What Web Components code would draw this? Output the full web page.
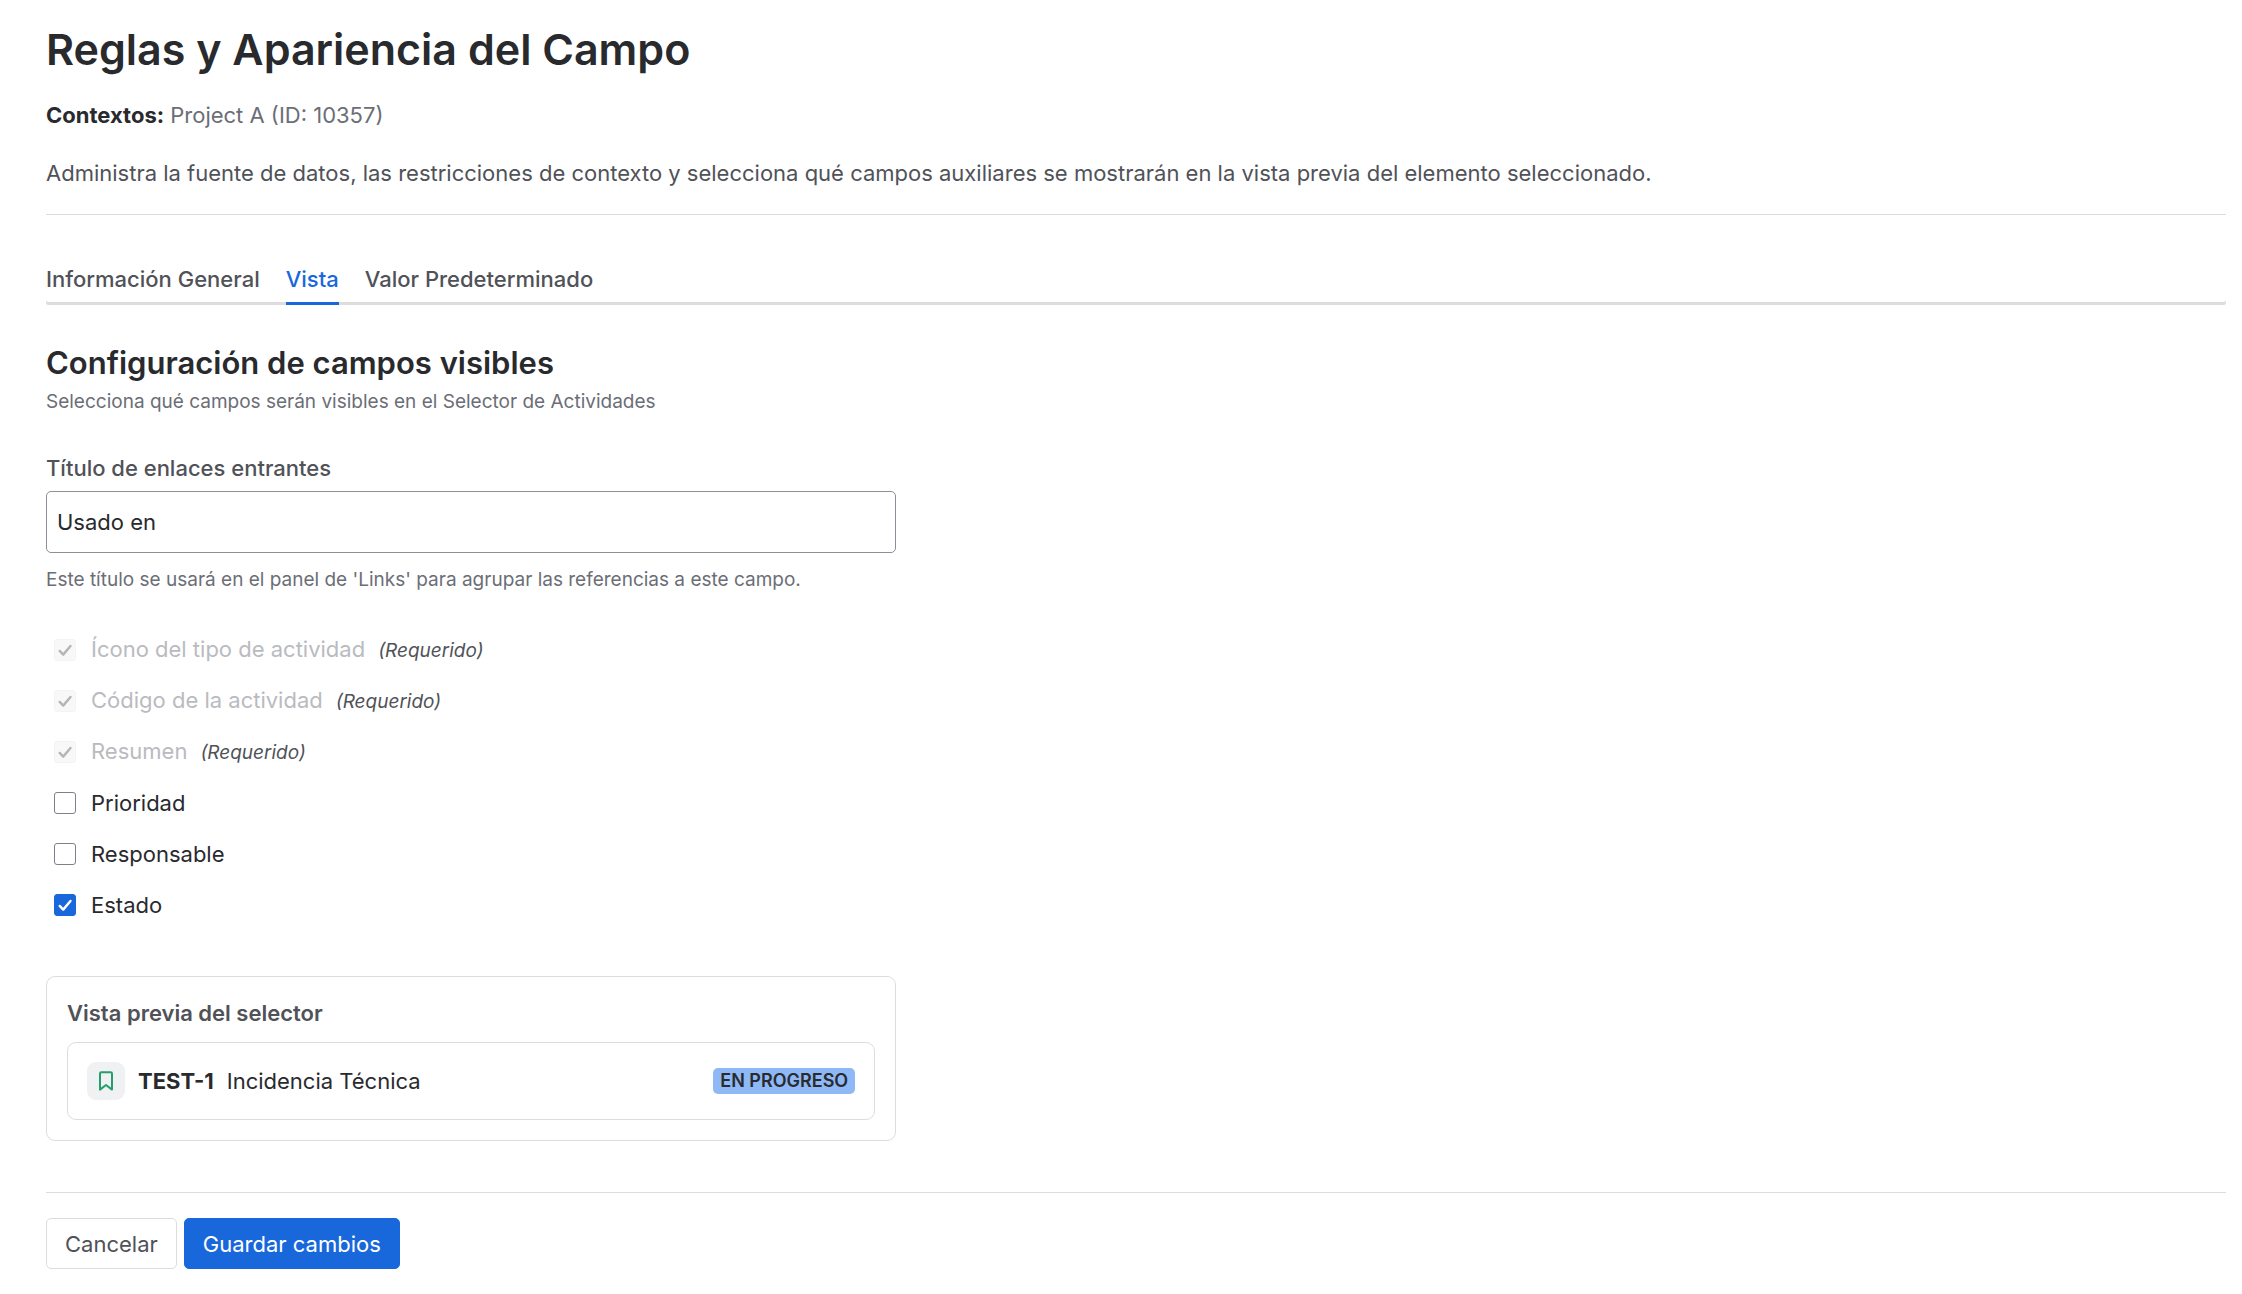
<!DOCTYPE html>
<html lang="es">
<head>
<meta charset="utf-8">
<title>Reglas y Apariencia del Campo</title>
<style>
  body {
    margin: 0;
    background: #fff;
    color: #292a2e;
    font: 400 22px/32px Inter, "Liberation Sans", sans-serif;
    --text: #292a2e;
    --subtle: #505258;
    --subtlest: #6b6e76;
    --disabled: #b9bbc0;
    --line: #dddddf;
    --brand: #1868db;
  }
</style>
</head>
<body>
<field-config-page></field-config-page>

<template id="page-tpl">
  <style>
    :host { display: block; padding: 25px 16px 24px 46px; }
    form { display: flex; flex-direction: column; }
    .narrow { width: 39%; box-sizing: border-box; }
    h2 { margin: 38px 0 7px; font-size: 31px; line-height: 40px; font-weight: 600; }
    .hint { margin: 0; font-size: 19px; line-height: 24px; color: var(--subtlest); }
    text-field { margin-top: 38px; }
    .list { margin: 32px 0 46px; }
    footer { display: flex; gap: 7px; margin-top: 51px; padding-top: 25px; border-top: 1px solid var(--line); }
  </style>
  <page-header heading="Reglas y Apariencia del Campo">
    <span slot="label">Contextos:</span>
    <span slot="context">Project A (ID: 10357)</span>
    <span slot="description">Administra la fuente de datos, las restricciones de contexto y selecciona qué campos auxiliares se mostrarán en la vista previa del elemento seleccionado.</span>
  </page-header>
  <tab-bar tabs="Información General|Vista|Valor Predeterminado" active="1"></tab-bar>
  <form>
    <h2>Configuración de campos visibles</h2>
    <p class="hint">Selecciona qué campos serán visibles en el Selector de Actividades</p>
    <text-field class="narrow" label="Título de enlaces entrantes" value="Usado en">Este título se usará en el panel de 'Links' para agrupar las referencias a este campo.</text-field>
    <div class="list">
      <check-option checked disabled note="(Requerido)">Ícono del tipo de actividad</check-option>
      <check-option checked disabled note="(Requerido)">Código de la actividad</check-option>
      <check-option checked disabled note="(Requerido)">Resumen</check-option>
      <check-option>Prioridad</check-option>
      <check-option>Responsable</check-option>
      <check-option checked>Estado</check-option>
    </div>
    <issue-preview class="narrow">
      <span slot="heading">Vista previa del selector</span>
      <span slot="key">TEST-1</span>
      <span slot="summary">Incidencia Técnica</span>
      <span slot="status">EN PROGRESO</span>
    </issue-preview>
    <footer>
      <action-button>Cancelar</action-button>
      <action-button primary>Guardar cambios</action-button>
    </footer>
  </form>
</template>

<template id="header-tpl">
  <style>
    :host { display: block; padding-bottom: 25px; border-bottom: 1px solid var(--line); }
    h1 { margin: 0; font-size: 43px; line-height: 48px; font-weight: 600; }
    p { margin: 26px 0 0; color: var(--subtle); }
    .context { color: var(--subtlest); }
    b { font-weight: 700; color: var(--text); }
  </style>
  <h1></h1>
  <p class="context"><b><slot name="label"></slot></b> <slot name="context"></slot></p>
  <p><slot name="description"></slot></p>
</template>

<template id="tabs-tpl">
  <style>
    :host { display: block; margin-top: 48px; }
    div { display: flex; gap: 26px; box-shadow: inset 0 -3px var(--line); border-radius: 2px; }
    button {
      margin: 0; padding: 0 0 7px; border: 0; border-bottom: 3px solid transparent; background: none;
      font: inherit; font-weight: 500; color: var(--subtle); cursor: pointer;
    }
    button[aria-selected="true"] { color: var(--brand); border-color: var(--brand); }
  </style>
  <div role="tablist"></div>
</template>

<template id="text-tpl">
  <style>
    :host { display: flex; flex-direction: column; }
    label { font-weight: 500; color: var(--subtle); }
    input {
      box-sizing: border-box; width: 100%; height: 62px; margin: 7px 0 15px; padding: 0 10px;
      border: 1px solid #8c8f97; border-radius: 5px; background: #fff; font: inherit; color: var(--text);
    }
    small { font-size: 19px; line-height: 24px; color: var(--subtlest); }
  </style>
  <label for="field"></label>
  <input id="field" type="text">
  <small><slot></slot></small>
</template>

<template id="check-tpl">
  <style>
    :host { display: flex; align-items: center; height: 51px; padding-left: 8px; }
    .box { display: grid; width: 22px; height: 22px; margin-right: 15px; }
    .box > * { grid-area: 1 / 1; }
    .text { display: flex; align-items: baseline; gap: 13px; }
    input {
      appearance: none; box-sizing: border-box; width: 22px; height: 22px; margin: 0;
      border: 1px solid #7d818a; border-radius: 3px; background: #fff;
    }
    input:checked { background: var(--brand); border-color: var(--brand); }
    input:disabled { background: #f8f8f8; border-color: #f4f4f5; }
    svg { width: 22px; height: 22px; fill: none; stroke: #fff; stroke-width: 2.4; stroke-linecap: round; stroke-linejoin: round; pointer-events: none; visibility: hidden; }
    input:checked + svg { visibility: visible; }
    input:disabled + svg { stroke: #b3b5ba; }
    :host([disabled]) label { color: var(--disabled); }
    em { font-size: 19px; color: var(--subtle); }
  </style>
  <span class="box">
    <input id="check" type="checkbox">
    <svg viewBox="0 0 22 22" aria-hidden="true"><path d="M5.7 11.9 9.2 15.6 16.5 7"/></svg>
  </span>
  <span class="text"><label for="check"><slot></slot></label></span>
</template>

<template id="preview-tpl">
  <style>
    :host { display: block; padding: 20px; border: 1px solid var(--line); border-radius: 9px; }
    .heading { font-weight: 600; color: var(--subtle); margin-bottom: 13px; }
    .issue { display: flex; align-items: center; padding: 19px; border: 1px solid var(--line); border-radius: 9px; }
    .icon { display: flex; width: 38px; height: 38px; border-radius: 9px; background: #f0f1f2; margin-right: 13px; }
    svg { width: 38px; height: 38px; fill: none; stroke: #22a06b; stroke-width: 2; stroke-linejoin: round; }
    .key { font-weight: 700; margin-right: 13px; }
    .status {
      margin-left: auto; padding: 0 7px; border-radius: 5px; background: #8fb8f6;
      font-size: 18px; line-height: 26px; font-weight: 600;
    }
  </style>
  <div class="heading"><slot name="heading"></slot></div>
  <div class="issue">
    <span class="icon"><svg viewBox="0 0 38 38" aria-hidden="true"><path d="M13 27.6V11.6Q13 10.2 14.4 10.2H23.6Q25 10.2 25 11.6V27.6L19 23Z"/></svg></span>
    <span class="key"><slot name="key"></slot></span>
    <span><slot name="summary"></slot></span>
    <span class="status"><slot name="status"></slot></span>
  </div>
</template>

<template id="button-tpl">
  <style>
    :host { display: block; }
    button {
      height: 51px; padding: 0 18px; border: 1px solid var(--line); border-radius: 5px;
      background: #fff; font: inherit; color: var(--subtle); cursor: pointer;
    }
    :host([primary]) button { background: var(--brand); border-color: var(--brand); color: #fff; }
  </style>
  <button type="button"><slot></slot></button>
</template>

<script>
  class Base extends HTMLElement {
    connectedCallback() {
      if (this.shadowRoot) return;
      const root = this.attachShadow({ mode: 'open' });
      root.append(document.getElementById(this.constructor.template).content.cloneNode(true));
      this.setup(root);
    }
    setup() {}
  }
  customElements.define('action-button', class extends Base {
    static template = 'button-tpl';
  });
  customElements.define('issue-preview', class extends Base {
    static template = 'preview-tpl';
  });
  customElements.define('check-option', class extends Base {
    static template = 'check-tpl';
    setup(root) {
      const input = root.querySelector('input');
      input.checked = this.hasAttribute('checked');
      input.disabled = this.hasAttribute('disabled');
      if (this.hasAttribute('note')) {
        const note = document.createElement('em');
        note.textContent = this.getAttribute('note');
        root.querySelector('.text').append(note);
      }
    }
  });
  customElements.define('text-field', class extends Base {
    static template = 'text-tpl';
    setup(root) {
      root.querySelector('label').textContent = this.getAttribute('label');
      root.querySelector('input').value = this.getAttribute('value');
    }
  });
  customElements.define('tab-bar', class extends Base {
    static template = 'tabs-tpl';
    setup(root) {
      const list = root.querySelector('div');
      this.getAttribute('tabs').split('|').forEach((name, i) => {
        const tab = document.createElement('button');
        tab.type = 'button';
        tab.setAttribute('role', 'tab');
        tab.setAttribute('aria-selected', String(i === Number(this.getAttribute('active'))));
        tab.textContent = name;
        tab.addEventListener('click', () => {
          for (const t of list.children) t.setAttribute('aria-selected', String(t === tab));
        });
        list.append(tab);
      });
    }
  });
  customElements.define('page-header', class extends Base {
    static template = 'header-tpl';
    setup(root) {
      root.querySelector('h1').textContent = this.getAttribute('heading');
    }
  });
  customElements.define('field-config-page', class extends Base {
    static template = 'page-tpl';
  });
</script>
</body>
</html>
